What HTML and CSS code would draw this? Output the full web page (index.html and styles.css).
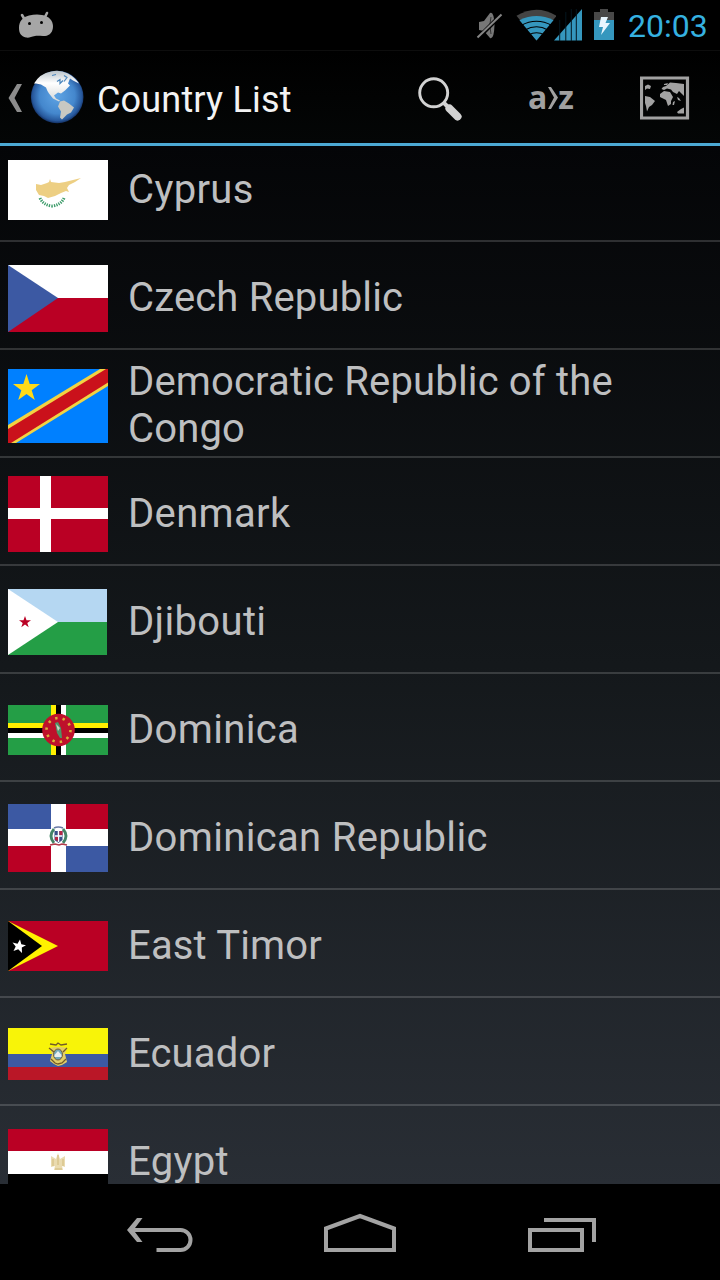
FILE: index.html
```html
<!DOCTYPE html>
<html lang="en">
<head>
<meta charset="utf-8">
<title>Country List</title>
<link rel="stylesheet" href="styles.css">
</head>
<body>
<div class="screen">
  <header class="status">
    <svg class="droid" width="40" height="34" viewBox="16 8 40 34">
      <path d="M22 15l3.500 6M47 13l-3 6" stroke="#a6a6a6" stroke-width="2.600" stroke-linecap="round"/>
      <path d="M19 28C19 21 23 17 29 15.500Q36 14 42 15C49 16 53 21 53 26C53 32 50 35.500 45 36C41 36.300 38 35.500 35 36C31 37 29 38 26 37.500C21 36.500 19 33 19 28Z" fill="#a6a6a6"/>
      <circle cx="29.500" cy="23.500" r="1.500"/><circle cx="41.500" cy="22.500" r="1.500"/>
    </svg>
    <div class="status-right">
      <svg class="mute" width="28" height="32" viewBox="476 9 28 32">
        <path d="M479 22L484 21L490 13Q494 11 494.500 25Q494 40 490 38L484 31L479 30Z" fill="#777"/>
        <path d="M491 17Q488.500 25 491 34" stroke="#333" fill="none"/>
        <path d="M478 38L502 14" stroke="#000" stroke-width="4"/><path d="M477.500 37.500L501.500 14.500" stroke="#858585" stroke-width="2"/>
      </svg>
      <svg class="wifi" width="40" height="32" viewBox="516 9 40 32">
        <path d="M536.500 40.500L516.500 15.800Q536.500 3.500 556.500 15.800Z" fill="#444"/>
        <path d="M536.500 40.500L519.500 20.200Q536.500 12 553.500 20.200Z" fill="#3597be"/>
        <path d="M521 25.500Q536.500 17 552 25.500M525 30Q536.500 23.500 548 30M528.500 35Q536.500 30.500 544.500 35" fill="none" stroke="#000" stroke-width="1.200"/>
      </svg>
      <svg class="signal" width="28" height="32" viewBox="554 9 28 32">
        <path d="M554 40.500L582 9V40.500Z" fill="#3597be"/><path d="M559.700 20V41M565.800 12V41M571.300 9V41M576.300 9V41" stroke="#04161e" stroke-width="1"/>
      </svg>
      <svg class="battery" width="20" height="32" viewBox="594 9 20 32">
        <path d="M594 12H600V9H608V12H614V20H594Z" fill="#484848"/><path d="M594 20H614V40H594Z" fill="#3597be"/>
        <path d="M601 17H608L605.500 23H610L601 35L603 27H599Z" fill="#e8f6ff"/>
      </svg>
      <span class="clock">20:03</span>
    </div>
  </header>
  <div class="actionbar">
    <svg class="up" width="16" height="30" viewBox="7 83 16 30"><path d="M22 84H17L8.500 98L17 112H22L14.500 98Z" fill="#8c8c8c"/></svg>
    <svg class="globe" width="54" height="54" viewBox="30 70.500 54 54">
      <defs>
        <radialGradient id="sea" cx=".5" cy=".48" r=".52"><stop offset="0" stop-color="#5fa4e4"/><stop offset=".65" stop-color="#4487cd"/><stop offset=".9" stop-color="#27589c"/><stop offset="1" stop-color="#132f61"/></radialGradient>
        <linearGradient id="land" x1="0" y1="0" x2="0" y2="1"><stop offset="0" stop-color="#b9c3ca"/><stop offset=".4" stop-color="#fff"/><stop offset="1" stop-color="#d5d8d8"/></linearGradient>
      </defs>
      <circle cx="57.200" cy="97.500" r="26.300" fill="url(#sea)"/>
      <path d="M34 84Q40 74 51 72Q60 70 68 74Q75 78 79 84L73 81L70 79L68 84L70 86L65 91L61 94L58 93L54 96L56 99L60 101L59 102L53 99L49 94Q47 91 46 88L41 85L36 84Z" fill="url(#land)"/>
      <path d="M52 76L56 75M57 82L60 80L60 84L63 81M64 76L67 78L64 82" stroke="#4b86bd" stroke-width="1.200" fill="none"/>
      <path d="M60 102L64 101L69 104L74 108L71 113L67 115L62 120L60 118L61 112L58 107Z" fill="#c8c8c2"/>
    </svg>
    <h1 class="title">Country List</h1>
    <svg class="search" width="46" height="46" viewBox="417 75 46 46">
      <circle cx="433.700" cy="91.800" r="14" fill="none" stroke="#d2d2d2" stroke-width="2.900"/>
      <path d="M444 102L449 107" stroke="#d2d2d2" stroke-width="4"/><path d="M449.500 107.500L457.500 115.500" stroke="#d2d2d2" stroke-width="8" stroke-linecap="round"/>
    </svg>
    <div class="sort"><span>a</span><svg width="11" height="23" viewBox="546 86 11 23"><path d="M547 87H550L557 97.500L550 109H547L553 97.500Z" fill="#a0a0a0"/></svg><span>z</span></div>
    <svg class="map" width="50" height="44" viewBox="640 76 50 44">
      <path d="M641.500 78H687.500V118H641.500Z" fill="none" stroke="#a2a2a2" stroke-width="3.200"/>
      <g fill="#a2a2a2"><path d="M645 86L648 84.500L651 86L650 89L647 88.500L645 90ZM645 96L650 97L655 101L652 105L649 107L647 111.500L646 106L645 103Z"/>
      <path d="M660 94L664 91L670 92L673 97L671 101L671 104L668 106L666 100L660 97Z"/>
      <path d="M661.500 89L663 87L666 86L670 82.500L676 83L684 84V96L682 94L679 91L677 94L673 92L671 89.500L667 88.500L664 90ZM664 84L668 83L667 85L664 85Z"/>
      <path d="M673 102L675 101L674 105H672.500ZM677 112L681 109L684 107.500V113.500H678ZM677 97L679 98L681 101L678 100Z"/></g>
    </svg>
  </div>
  <main class="viewport">
    <ul class="list">
      <li class="row"><svg class="flag" width="100" height="60" viewBox="0 0 100 60"><path d="M0 0H100V60H0Z" fill="#fff"/><path d="M28 24L33 25L39 23L41 22L42 19L43 22L51 23L57 22L65 20L73 18L67 22L61 25L59 28L61 32L58 31L53 33L47 36L40 38L36 36L31 35L28 30Z" fill="#edcf83"/><path d="M32 38Q35 45 44 46Q53 45 56 38" fill="none" stroke="#3c9b69" stroke-width="3" stroke-dasharray="1.300 1.100"/></svg><span class="name cy">Cyprus</span></li>
      <li class="row"><svg class="flag" width="100" height="67" viewBox="0 0 100 67"><path d="M0 0H100V34H0Z" fill="#fff"/><path d="M0 33H100V67H0Z" fill="#ba0024"/><path d="M0 0L50 33L0 67Z" fill="#3c59a3"/></svg><span class="name cz">Czech Republic</span></li>
      <li class="row"><svg class="flag" width="100" height="74" viewBox="0 0 100 74"><path d="M0 0H100V74H0Z" fill="#0080ff"/><path d="M0 56L92 0H100V17L8 74H0Z" fill="#f2d342"/><path d="M0 60L98 0H100V13.500L3 74H0Z" fill="#ca111b"/><path d="M18.500 5L21.700 15.100H32L23.700 21.200L26.800 31L18.500 25L10.200 31L13.300 21.200L5 15.100H15.300Z" fill="#ffda19"/></svg><span class="name cd">Democratic Republic of the<br>Congo</span></li>
      <li class="row"><svg class="flag" width="100" height="76" viewBox="0 0 100 76"><path d="M0 0H100V76H0Z" fill="#ba0024"/><path d="M32 0H43V32H100V43H43V76H32V43H0V32H32Z" fill="#fff"/></svg><span class="name dk">Denmark</span></li>
      <li class="row"><svg class="flag" width="100" height="66" viewBox="0 0 100 66"><path d="M0 0H99V33H0Z" fill="#b5d7f2"/><path d="M0 33H99V66H0Z" fill="#249e46"/><path d="M0 0L50 33L0 66Z" fill="#fff"/><path d="M17 27L18.500 31.200H23L19.300 34L20.700 38.200L17 35.600L13.300 38.200L14.700 34L11 31.200H15.500Z" fill="#ba0024"/></svg><span class="name dj">Djibouti</span></li>
      <li class="row"><svg class="flag" width="100" height="50" viewBox="0 0 100 50"><path d="M0 0H100V50H0Z" fill="#249e46"/><path d="M43 0H48V50H43ZM0 18H100V23H0Z" fill="#ffef00"/><path d="M53 0H58V50H53ZM0 28H100V33H0Z" fill="#fff"/><path d="M48 0H53V50H48ZM0 23H100V28H0Z"/><circle cx="50.500" cy="25" r="16.300" fill="#be112b"/><circle cx="50.500" cy="25" r="12" fill="none" stroke="#d9b137" stroke-width="2.600" stroke-dasharray="2.400 5.140"/><path d="M47 18L50 17L53 23L54 33H52L49 28Z" fill="#4d9467"/><path d="M48 19L52 23L50 26Z" fill="#c8d8c6"/></svg><span class="name dm">Dominica</span></li>
      <li class="row"><svg class="flag" width="100" height="68" viewBox="0 0 100 68"><path d="M0 0H100V68H0Z" fill="#fff"/><path d="M0 0H43V25H0ZM58 42H100V68H58Z" fill="#3c59a3"/><path d="M58 0H100V25H58ZM0 42H43V68H0Z" fill="#ba0024"/><path d="M46 25Q40 32 46 39M55 25Q61 32 55 39" fill="none" stroke="#438466" stroke-width="2.800"/><path d="M46 24Q50 22 55 24" fill="none" stroke="#6879a5" stroke-width="1.500"/><path d="M42 41L47 40L51 41L54 40L59 41" fill="none" stroke="#b23b4b" stroke-width="1.600"/><path d="M46.500 27H54.500V36L50.500 39L46.500 36Z" fill="#385088"/><path d="M50.500 27V38M47 32H54" stroke="#fff" stroke-width="1.500"/><path d="M47 33H50V37L47 36ZM51.500 27H54.500V31H51.500Z" fill="#b32745"/></svg><span class="name do">Dominican Republic</span></li>
      <li class="row"><svg class="flag" width="100" height="50" viewBox="0 0 100 50"><path d="M0 0H100V50H0Z" fill="#ba0024"/><path d="M0 0L50 25L0 50Z" fill="#fff200"/><path d="M0 0L34 25L0 50Z"/><path d="M12 18.500L13.300 23.200L18 24.200L13.800 26.500L14 32L10.200 28.300L5.500 30L7.700 25.600L4.500 21.500L9.500 22.700Z" fill="#fff"/></svg><span class="name tl">East Timor</span></li>
      <li class="row"><svg class="flag" width="100" height="52" viewBox="0 0 100 52"><path d="M0 0H100V27H0Z" fill="#f8f408"/><path d="M0 26H100V39H0Z" fill="#3c59a3"/><path d="M0 39H100V52H0Z" fill="#ba1727"/><path d="M42 20L47 19H53L59 20L57 26L59 34L54 37L50 38L46 36L42 33L44 26Z" fill="#e2cf67"/><path d="M42 16L48 17L50 15L53 17L59 16M41 20L46 24M59 20L55 24M43 31L47 35L50 36L54 35L58 31" fill="none" stroke="#735c27" stroke-width="1.300"/><ellipse cx="50" cy="26.500" rx="4.500" ry="5.500" fill="#73a8b8" stroke="#765c30"/><path d="M46.500 27L50 23L53.500 27V29H46.500Z" fill="#e7eeee"/></svg><span class="name ec">Ecuador</span></li>
      <li class="row"><svg class="flag" width="100" height="67" viewBox="0 0 100 67"><path d="M0 0H100V22H0Z" fill="#ba0024"/><path d="M0 22H100V45H0Z" fill="#fff"/><path d="M0 45H100V67H0Z"/><path d="M43 27L48 30L50 24L52 30L57 27V38L54 37L55 41H46L47 37L43 38Z" fill="#eadbb0"/><path d="M45 30V37M50 26V36M55 30V37M47 40H54" stroke="#d1ba7b" fill="none"/></svg><span class="name eg">Egypt</span></li>
    </ul>
  </main>
  <nav class="nav">
    <svg class="back" width="68" height="40" viewBox="126 1214 68 40"><path d="M130 1230H180.500A10 10 0 0 1 180.500 1250H156.500" fill="none" stroke="#a3a3a3" stroke-width="4"/><path d="M137 1218H142.500L133.500 1230L142.500 1242H137L127 1230Z" fill="#a3a3a3"/></svg>
    <svg class="home" width="74" height="40" viewBox="323 1213 74 40"><path d="M326 1228.500L360 1216L394 1228.500V1250H326Z" fill="none" stroke="#a3a3a3" stroke-width="4"/></svg>
    <svg class="recent" width="70" height="36" viewBox="527 1217 70 36"><path d="M530 1230H582V1250H530ZM544 1220H594V1242" fill="none" stroke="#a3a3a3" stroke-width="4"/></svg>
  </nav>
</div>
</body>
</html>
```
FILE: styles.css
```css
* { box-sizing: border-box; }
body { margin: 0; background: #000; font-family: Roboto, sans-serif; }
svg { display: block; flex: none; }
.screen { width: 720px; height: 1280px; display: flex; flex-direction: column; overflow: hidden; background: #000; }
.status { height: 50px; flex: none; display: flex; justify-content: space-between; padding: 8px 12px 0 16px; }
.status-right { display: flex; padding-top: 1px; }
.wifi { margin-left: 12px; }
.signal { margin-left: -2px; }
.battery { margin-left: 12px; }
.clock { width: 80px; margin-left: 14px; font-size: 32px; line-height: 34px; color: #35b1e0; white-space: nowrap; }
.actionbar { height: 96px; flex: none; display: flex; align-items: center; padding-left: 7px; border-top: 1px solid #0d0d0d; border-bottom: 3px solid #4ca9d4; background: linear-gradient(#000, #040606); }
.up { margin-top: 2px; }
.globe { margin-left: 7px; }
.title { width: 200px; margin: 5px 0 0 13px; font-weight: 400; font-size: 36px; line-height: 44px; letter-spacing: .18px; color: #f3f3f3; white-space: nowrap; }
.search { margin-left: 120px; margin-top: 3px; }
.sort { display: flex; align-items: center; width: 46px; margin-left: 65px; font: 700 32px/40px "Open Sans", sans-serif; color: #a0a0a0; }
.map { margin-left: 66px; margin-top: 2px; }
.viewport { height: 1038px; flex: none; overflow: hidden; background: linear-gradient(#040507, #14181b 50%, #292e35); }
.list { list-style: none; padding: 0; margin: -12px 0 0; }
.row { height: 108px; display: flex; align-items: center; gap: 20px; padding: 6px 0 0 8px; border-bottom: 2px solid rgba(255, 255, 255, .16); }
.name { margin-bottom: 2px; font-size: 40px; line-height: 47px; color: #bebfc0; white-space: nowrap; }
.cy, .dk, .dj, .dm, .do, .eg { letter-spacing: .34px; }
.cz, .cd, .tl, .ec { letter-spacing: .16px; }
.nav { height: 96px; flex: none; display: flex; align-items: flex-start; padding-left: 126px; background: #000; }
.back { margin-top: 30px; }
.home { margin: 29px 0 0 129px; }
.recent { margin: 33px 0 0 130px; }
```
